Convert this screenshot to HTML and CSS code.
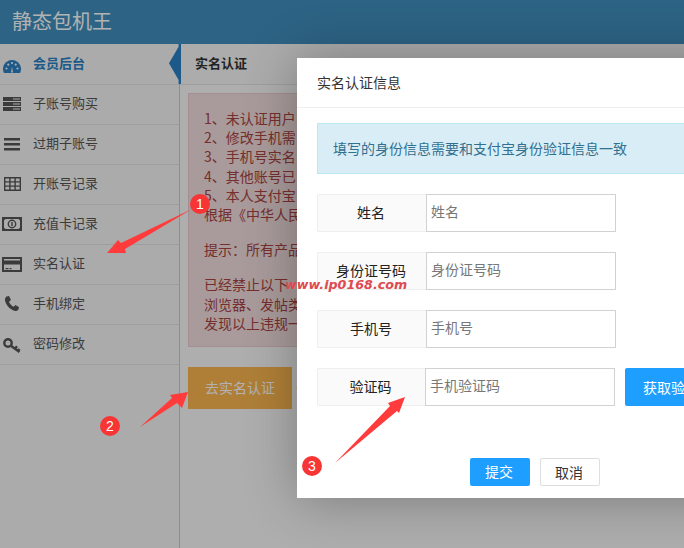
FILE: index.html
```html
<!DOCTYPE html>
<html lang="zh">
<head>
<meta charset="utf-8">
<title>实名认证</title>
<link rel="stylesheet" href="styles.css">
</head>
<body>
<header class="topbar">静态包机王</header>
<div class="main">
  <nav class="sidebar">
    <a class="item active"><svg class="ico" viewBox="0 0 24 20"><path class="fill" d="M4.500 21A9 9 0 1 1 19.500 21Z"/><g class="hole"><circle cx="6.500" cy="15.500" r="1.100"/><circle cx="8.300" cy="11.700" r="1.100"/><circle cx="12" cy="10.100" r="1.100"/><circle cx="15.700" cy="11.700" r="1.100"/><circle cx="17.500" cy="15.500" r="1.100"/><path d="M11 19.500l1-6 1 6Z"/></g></svg><span>会员后台</span><i class="pointer"></i></a>
    <a class="item"><svg class="ico" viewBox="0 0 24 20"><path class="fill" d="M3 4h18v4H3zM3 9h18v4H3zM3 14h18v4H3z"/><path class="hole" d="M13 5.500h7v1h-7zM13 10.500h7v1h-7zM13 15.500h7v1h-7z"/></svg><span>子账号购买</span></a>
    <a class="item"><svg class="ico" viewBox="0 0 24 20"><path class="fill" d="M4 5h16v2.500H4zM4 10h16v2.500H4zM4 15h16v2.500H4z"/></svg><span>过期子账号</span></a>
    <a class="item"><svg class="ico" viewBox="0 0 24 20"><path class="line" d="M4.700 4.700h15.600v12.600H4.700zM4.700 8.900h15.600M4.700 13.100h15.600M9.900 4.700v12.600M15.100 4.700v12.600"/></svg><span>开账号记录</span></a>
    <a class="item"><svg class="ico" viewBox="0 0 24 20"><path class="line thick" d="M3 5h18v12H3z"/><path class="fill" d="M3 5h4l-4 3zM21 5h-4l4 3zM3 17h4l-4-3zM21 17h-4l4-3z"/><circle class="line" cx="12" cy="11" r="3.700"/><path class="fill" d="M11.300 9h1.400v4h-1.400z"/></svg><span>充值卡记录</span></a>
    <a class="item"><svg class="ico" viewBox="0 0 24 20"><path class="line thick" d="M3 5h18v13H3z"/><path class="fill" d="M3 7.500h18v4H3zM5.500 15h3v1.200h-3zM9.500 15h2v1.200h-2z"/></svg><span>实名认证</span></a>
    <a class="item"><svg class="ico" viewBox="0 0 24 20"><path class="fill" d="M6.500 3.500L9 3l2 4-2 1.800c1 2.400 2.600 4 4.700 5L15.500 12l3.500 2.200-.7 2.500c-1 1.200-2.500 1.500-4 1C9.500 16.200 6 12 5 7.500c-.2-1.600.4-3.200 1.500-4Z"/></svg><span>手机绑定</span></a>
    <a class="item"><svg class="ico" viewBox="0 0 24 20"><circle class="line heavy" cx="8" cy="10" r="3.700"/><path class="line heavy" d="M10.500 12.500l9 6.500M15 15.800l2-2.600M18 18l1.500-2"/></svg><span>密码修改</span></a>
  </nav>
  <main class="content">
    <div class="crumb">实名认证</div>
    <div class="notice">
      <p>1、未认证用户<br>2、修改手机需<br>3、手机号实名<br>4、其他账号已<br>5、本人支付宝<br>根据《中华人民</p>
      <p>提示：所有产品</p>
      <p>已经禁止以下<br>浏览器、发帖类<br>发现以上违规一</p>
    </div>
    <div class="action"><a class="go">去实名认证</a><span class="after">去</span></div>
  </main>
</div>
<div class="shade"></div>
<section class="dialog">
  <h2 class="dialog-title">实名认证信息</h2>
  <div class="dialog-body">
    <div class="info">填写的身份信息需要和支付宝身份验证信息一致</div>
    <div class="field"><label class="cap">姓名</label><div class="entry">姓名</div></div>
    <div class="field"><label class="cap">身份证号码</label><div class="entry">身份证号码</div></div>
    <div class="field"><label class="cap">手机号</label><div class="entry">手机号</div></div>
    <div class="field code"><label class="cap">验证码</label><div class="entry">手机验证码</div><a class="btn primary send">获取验证码</a></div>
    <div class="foot"><a class="btn primary">提交</a><a class="btn plain">取消</a></div>
  </div>
</section>
<svg class="marks" viewBox="0 0 684 548">
  <polygon points="107,253 118,240 121,243 192,209 125,249 126,253"/>
  <polygon points="188,392 170,395 172,398 140,427 177,403 182,408"/>
  <polygon points="405,397 388,403 390,406 335,463 397,411 399,413"/>
</svg>
<b class="num n1">1</b>
<b class="num n2">2</b>
<b class="num n3">3</b>
<div class="stamp">www.ip0168.com</div>
</body>
</html>
```

FILE: styles.css
```css
* { box-sizing: border-box; }
html, body { margin: 0; height: 100%; }
body {
  position: relative;
  width: 684px;
  height: 548px;
  overflow: hidden;
  background: #fafafa;
  color: #333;
  font: 14px/20px "Noto Sans CJK SC", "Liberation Sans", sans-serif;
}
.topbar {
  height: 44px;
  padding-left: 12px;
  background: #418fbe;
  color: #fff;
  font-size: 20px;
  line-height: 42px;
}
.main { display: flex; height: 504px; }
.sidebar {
  flex: none;
  width: 180px;
  padding-top: 1px;
  background: #f5f5f5;
  border-right: 1px solid #ccc;
}
.item {
  position: relative;
  display: flex;
  align-items: center;
  gap: 9px;
  height: 40px;
  padding-bottom: 3px;
  border-bottom: 1px solid #e2e2e2;
  color: #555;
  font-size: 13px;
}
.item.active { color: #2a80c4; font-weight: 700; }
.ico { flex: none; width: 24px; height: 20px; }
.fill { fill: #555; }
.hole { fill: #f5f5f5; }
.line { fill: none; stroke: #555; stroke-width: 1.4; }
.thick { stroke-width: 2; }
.heavy { stroke-width: 2.400; }
.active .fill { fill: #2a80c4; }
.pointer {
  position: absolute;
  top: -1px;
  right: -2px;
  width: 12px;
  height: 40px;
  background: #2a80c4;
  clip-path: polygon(100% 0, 100% 100%, 80% 100%, 80% 90%, 0 48%, 80% 7%, 80% 0);
}
.content { flex: 1; min-width: 0; }
.crumb {
  height: 41px;
  padding-left: 15px;
  border-bottom: 1px solid #e2e2e2;
  background: #f7f7f7;
  font-size: 13px;
  font-weight: 700;
  line-height: 38px;
}
.notice {
  width: 480px;
  height: 254px;
  margin: 8px 0 20px 8px;
  padding: 15px 15px;
  border: 1px solid #ebccd1;
  background: #f2dede;
  color: #a94442;
  line-height: 19.200px;
  white-space: nowrap;
}
.notice p { margin: 0 0 16px; }
.action { display: flex; align-items: center; margin-left: 8px; gap: 4px; }
.go {
  width: 104px;
  height: 42px;
  background: #fbb650;
  color: #fff;
  line-height: 41px;
  text-align: center;
}
.after { color: #f0ad4e; }
.shade {
  position: absolute;
  inset: 0;
  background: rgba(0, 0, 0, .3);
}
.dialog {
  position: absolute;
  left: 297px;
  top: 58px;
  width: 600px;
  height: 440px;
  background: #fff;
  box-shadow: 1px 1px 50px rgba(0, 0, 0, .3);
}
.dialog-title {
  height: 50px;
  margin: 0;
  padding-left: 20px;
  border-bottom: 1px solid #eee;
  color: #333;
  font-size: 14px;
  font-weight: 400;
  line-height: 48px;
}
.dialog-body { padding: 15px 20px 0; }
.info {
  height: 51px;
  margin-bottom: 20px;
  padding-left: 15px;
  border: 1px solid #bce8f1;
  background: #d9edf7;
  color: #31708f;
  line-height: 48px;
}
.field { display: flex; height: 38px; margin-bottom: 20px; }
.cap {
  flex: none;
  width: 109px;
  padding-right: 2px;
  border: 1px solid #eee;
  border-right: 0;
  border-radius: 2px 0 0 2px;
  background: #fafafa;
  color: #222;
  line-height: 35px;
  text-align: center;
}
.entry {
  flex: none;
  width: 190px;
  padding-left: 4px;
  border: 1px solid #d2d2d2;
  color: #777;
  line-height: 32px;
}
.code .cap { width: 108px; }
.btn {
  display: block;
  flex: none;
  border-radius: 2px;
  font-size: 14px;
  text-align: center;
}
.primary { background: #1e9fff; color: #fff; }
.send {
  width: 106px;
  margin-left: 10px;
  line-height: 38px;
}
.foot { display: flex; gap: 10px; margin: 52px 0 0 153px; }
.foot .btn { width: 60px; height: 28px; padding-right: 2px; line-height: 27px; }
.plain { border: 1px solid #dedede; color: #333; }
.marks { position: absolute; inset: 0; width: 684px; height: 548px; pointer-events: none; }
.marks polygon { fill: #ff3b3b; }
.num {
  position: absolute;
  width: 20px;
  height: 20px;
  border-radius: 50%;
  background: #f73535;
  color: #fff;
  font: 400 14px/20px "Liberation Sans", sans-serif;
  text-align: center;
}
.n1 { left: 190px; top: 194px; }
.n2 { left: 100px; top: 416px; }
.n3 { left: 302px; top: 456px; }
.stamp {
  position: absolute;
  left: 285px;
  top: 276px;
  color: #de4a50;
  font: italic 700 12.700px/18px "DejaVu Sans", sans-serif;
}
```
